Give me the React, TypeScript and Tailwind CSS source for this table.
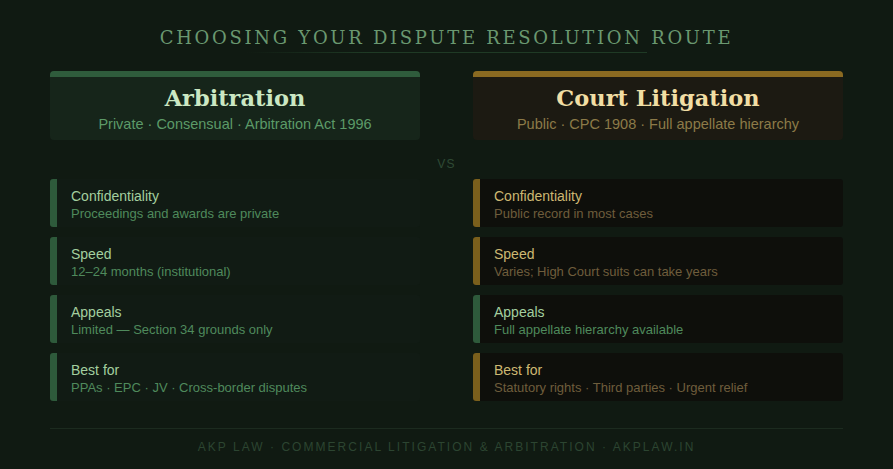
type Row = { label: string; detail: string; tone: 'green' | 'gold' };

const arbitration: Row[] = [
  { label: 'Confidentiality', detail: 'Proceedings and awards are private', tone: 'green' },
  { label: 'Speed', detail: '12–24 months (institutional)', tone: 'green' },
  { label: 'Appeals', detail: 'Limited — Section 34 grounds only', tone: 'green' },
  { label: 'Best for', detail: 'PPAs · EPC · JV · Cross-border disputes', tone: 'green' },
];

const litigation: Row[] = [
  { label: 'Confidentiality', detail: 'Public record in most cases', tone: 'gold' },
  { label: 'Speed', detail: 'Varies; High Court suits can take years', tone: 'gold' },
  { label: 'Appeals', detail: 'Full appellate hierarchy available', tone: 'green' },
  { label: 'Best for', detail: 'Statutory rights · Third parties · Urgent relief', tone: 'gold' },
];

function FeatureRow({ row, dark }: { row: Row; dark: boolean }) {
  const green = row.tone === 'green';
  return (
    <div className={`flex h-[48px] overflow-hidden rounded-[3px] ${dark ? 'bg-[#0e0f0b]' : 'bg-[#111b14]'}`}>
      <div className={`w-[7px] shrink-0 ${green ? 'bg-[#2e5a3b]' : 'bg-[#7a5f1c]'}`} />
      <div className="flex flex-col pl-[14px] pt-[8px]">
        <div className={`text-[14px] leading-[18px] ${green ? 'text-[#a3cf9f]' : 'text-[#cdb872]'}`}>{row.label}</div>
        <div className={`text-[13px] leading-[18px] ${green ? 'text-[#4f8a5c]' : 'text-[#6e5d3c]'}`}>{row.detail}</div>
      </div>
    </div>
  );
}

function Header({ title, sub, gold }: { title: string; sub: string; gold: boolean }) {
  return (
    <div className={`h-[69px] overflow-hidden rounded-[4px] ${gold ? 'bg-[#1c1a12]' : 'bg-[#16251a]'}`}>
      <div className={`h-[6px] ${gold ? 'bg-[#8a6a21]' : 'bg-[#2f5c3c]'}`} />
      <div className="flex flex-col items-center pt-[6px]">
        <div
          className={`text-[22.5px] font-bold leading-[30px] ${gold ? 'text-[#f1dea4]' : 'text-[#cbe8c3]'}`}
          style={{ fontFamily: 'Georgia, "DejaVu Serif", serif' }}
        >
          {title}
        </div>
        <div className={`mt-[2px] text-[14.5px] leading-[18px] ${gold ? 'text-[#8c7a48]' : 'text-[#5c9a68]'}`}>{sub}</div>
      </div>
    </div>
  );
}

export default function App() {
  return (
    <div
      className="h-[469px] w-full bg-[#101a12] px-[50px] pt-[26px]"
      style={{ fontFamily: '"Liberation Sans", Arial, sans-serif' }}
    >
      <h1
        className="text-center text-[18px] leading-[24px] tracking-[0.15em] text-[#6a9870]"
        style={{ fontFamily: 'Georgia, "DejaVu Serif", serif' }}
      >
        CHOOSING YOUR DISPUTE RESOLUTION ROUTE
      </h1>
      <div className="mx-auto mt-[2px] h-px w-[400px] bg-[linear-gradient(90deg,transparent,#1f3a25_30%,#1f3a25_100%)]" />

      <div className="mt-[18px] grid grid-cols-2 gap-x-[53px]">
        <Header title="Arbitration" sub="Private · Consensual · Arbitration Act 1996" gold={false} />
        <Header title="Court Litigation" sub="Public · CPC 1908 · Full appellate hierarchy" gold />
      </div>

      <div className="flex h-[39px] items-center justify-center pt-[8px] text-[12px] tracking-[0.1em] text-[#2f4a35]">VS</div>

      <div className="grid grid-cols-2 gap-x-[53px]">
        <div className="flex flex-col gap-[10px]">
          {arbitration.map((r) => (
            <FeatureRow key={r.label} row={r} dark={false} />
          ))}
        </div>
        <div className="flex flex-col gap-[10px]">
          {litigation.map((r) => (
            <FeatureRow key={r.label} row={r} dark />
          ))}
        </div>
      </div>

      <div className="mt-[27px] border-t border-[#1c2b1f] pt-[9px] text-center text-[12px] leading-[18px] tracking-[0.17em] text-[#2c4531]">
        AKP LAW · COMMERCIAL LITIGATION &amp; ARBITRATION · AKPLAW.IN
      </div>
    </div>
  );
}
